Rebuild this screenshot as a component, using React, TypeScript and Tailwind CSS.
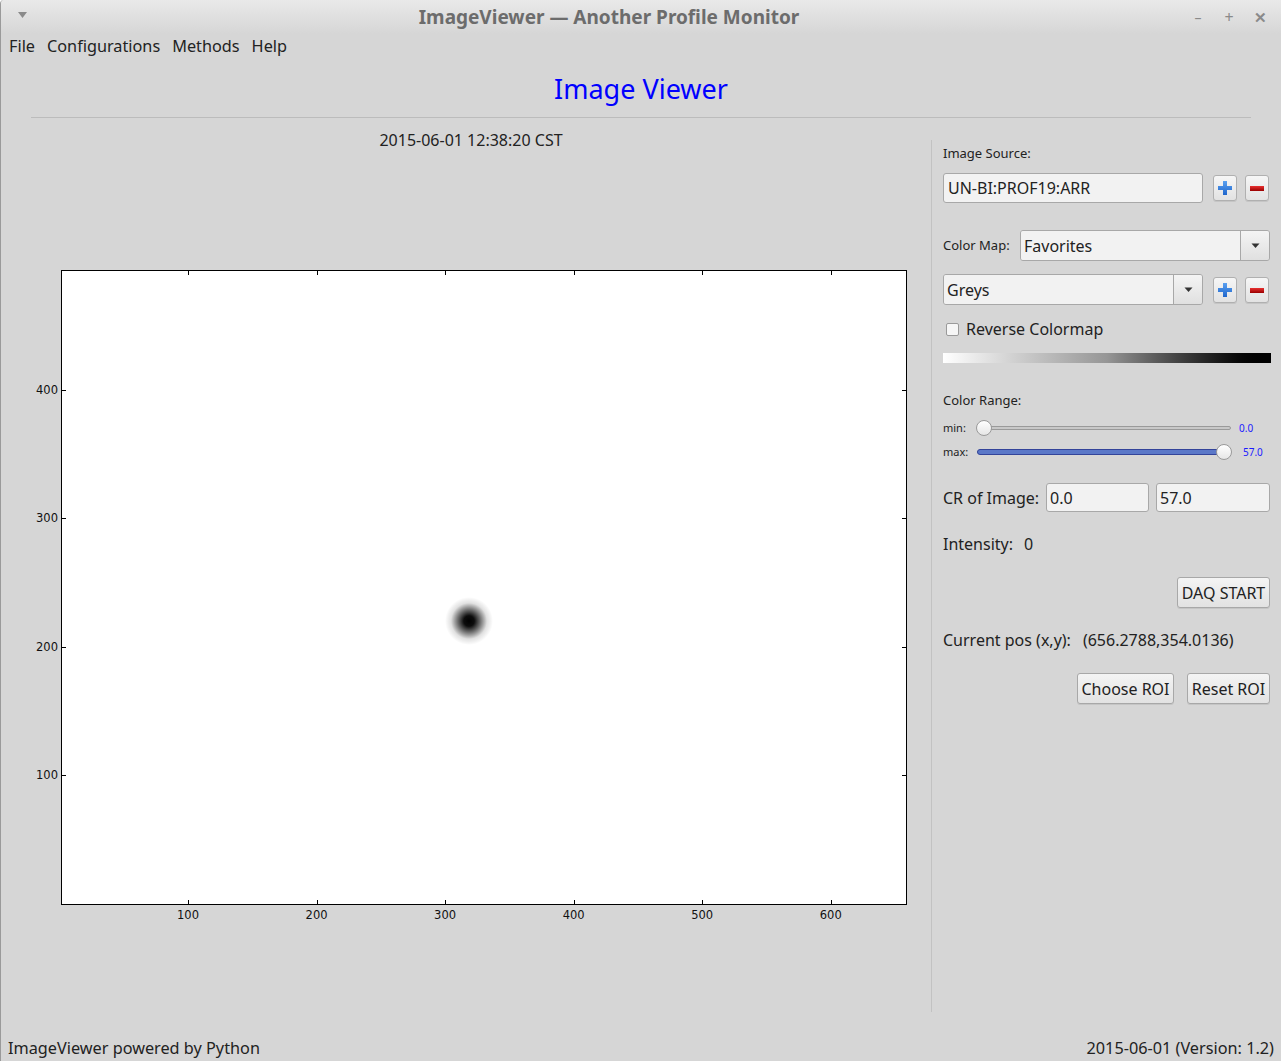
import React from "react";

const ui = "font-['Noto_Sans',sans-serif]";

function PlusIcon() {
  return (
    <svg width="16" height="16" viewBox="0 0 16 16">
      <defs>
        <linearGradient id="pg" x1="0" y1="0" x2="0" y2="1">
          <stop offset="0" stopColor="#5aa0f0" />
          <stop offset="1" stopColor="#1f66cc" />
        </linearGradient>
      </defs>
      <path d="M6 1h4v5h5v4h-5v5H6v-5H1V6h5z" fill="url(#pg)" />
    </svg>
  );
}

function MinusIcon() {
  return (
    <svg width="16" height="16" viewBox="0 0 16 16">
      <defs>
        <linearGradient id="mg" x1="0" y1="0" x2="0" y2="1">
          <stop offset="0" stopColor="#e83030" />
          <stop offset="1" stopColor="#9a0000" />
        </linearGradient>
      </defs>
      <rect x="1" y="6" width="14" height="5" fill="url(#mg)" />
    </svg>
  );
}

function IconButton({ children }: { children: React.ReactNode }) {
  return (
    <div className="flex h-[26px] w-[24px] items-center justify-center rounded-[3px] border border-[#b0b0b0] bg-gradient-to-b from-[#f6f6f6] to-[#e2e2e2] shadow-[0_1px_0_rgba(0,0,0,0.08)]">
      {children}
    </div>
  );
}

function Arrow() {
  return (
    <svg width="9" height="6" viewBox="0 0 9 6">
      <path d="M0.5 0.5h8L4.5 5z" fill="#333" />
    </svg>
  );
}

function Combo({ text, width }: { text: string; width: string }) {
  return (
    <div className={`flex h-[31px] ${width} overflow-hidden rounded-[3px] border border-[#a8a8a8]`}>
      <div className="flex flex-1 items-center bg-[#f2f2f2] px-[3px] text-[16px] text-[#222]">{text}</div>
      <div className="flex w-[29px] items-center justify-center border-l border-[#a8a8a8] bg-gradient-to-b from-[#f4f4f4] to-[#e0e0e0]">
        <Arrow />
      </div>
    </div>
  );
}

function Button({ text, width }: { text: string; width: string }) {
  return (
    <div className={`flex h-[31px] ${width} items-center justify-center rounded-[3px] border border-[#a8a8a8] bg-gradient-to-b from-[#f4f4f4] to-[#e2e2e2] text-[16px] text-[#222] shadow-[0_1px_0_rgba(0,0,0,0.08)]`}>
      {text}
    </div>
  );
}

function Slider({ label, value, pos, filled }: { label: string; value: string; pos: number; filled: boolean }) {
  return (
    <div className="flex h-[16px] items-center">
      <span className="w-[34px] text-[11px] text-[#222]">{label}</span>
      <div className="relative h-[16px] w-[256px]">
        <div className="absolute left-0 right-[2px] top-[6px] h-[4px] rounded-full border border-[#9a9a9a] bg-[#c8c8c8]" />
        {filled && (
          <div
            className="absolute left-0 top-[5px] h-[6px] rounded-full border border-[#33449a] bg-[#5b78c8]"
            style={{ width: pos }}
          />
        )}
        <div
          className="absolute top-0 h-[16px] w-[16px] rounded-full border border-[#9a9a9a] bg-gradient-to-b from-[#ffffff] to-[#e6e6e6]"
          style={{ left: pos - 8 }}
        />
      </div>
      <span className={`${filled ? "ml-[10px]" : "ml-[6px]"} text-[10px] text-[#1a1aff]`}>{value}</span>
    </div>
  );
}

const xTicks = [100, 200, 300, 400, 500, 600];
const yTicks = [100, 200, 300, 400];

function Plot() {
  // plot area 846 x 635, data x 1.2..659, y 0..493.6
  const W = 846;
  const H = 635;
  const px = (v: number) => 188 - 61 + (v - 100) * 1.2855;
  const py = (v: number) => 775 - 270 + (100 - v) * 1.2835;
  return (
    <div className="relative ml-[60px] mt-[119px] h-[635px] w-[846px]">
      <svg width={W} height={H} className="absolute left-0 top-0">
        <defs>
          <radialGradient id="spot">
            <stop offset="0" stopColor="#000" stopOpacity="1" />
            <stop offset="0.22" stopColor="#000" stopOpacity="0.95" />
            <stop offset="0.48" stopColor="#000" stopOpacity="0.55" />
            <stop offset="0.75" stopColor="#000" stopOpacity="0.12" />
            <stop offset="1" stopColor="#000" stopOpacity="0" />
          </radialGradient>
        </defs>
        <rect x="0.5" y="0.5" width={W - 1} height={H - 1} fill="#fff" stroke="#000" />
        <circle cx={469 - 61} cy={621 - 270} r="24" fill="url(#spot)" />
        {xTicks.map((t) => (
          <g key={t} stroke="#000" strokeWidth="1">
            <line x1={Math.round(px(t)) + 0.5} x2={Math.round(px(t)) + 0.5} y1={H - 1} y2={H - 5} />
            <line x1={Math.round(px(t)) + 0.5} x2={Math.round(px(t)) + 0.5} y1={1} y2={5} />
          </g>
        ))}
        {yTicks.map((t) => (
          <g key={t} stroke="#000" strokeWidth="1">
            <line y1={Math.round(py(t)) + 0.5} y2={Math.round(py(t)) + 0.5} x1={1} x2={5} />
            <line y1={Math.round(py(t)) + 0.5} y2={Math.round(py(t)) + 0.5} x1={W - 1} x2={W - 5} />
          </g>
        ))}
      </svg>
      {xTicks.map((t) => (
        <span
          key={t}
          className="absolute top-[637px] w-[40px] -translate-x-1/2 text-center font-['DejaVu_Sans',sans-serif] text-[11.5px] text-[#111]"
          style={{ left: px(t) }}
        >
          {t}
        </span>
      ))}
      {yTicks.map((t) => (
        <span
          key={t}
          className="absolute right-[849px] -translate-y-1/2 font-['DejaVu_Sans',sans-serif] text-[11.5px] leading-[14px] text-[#111]"
          style={{ top: py(t) }}
        >
          {t}
        </span>
      ))}
    </div>
  );
}

export default function App() {
  return (
    <div className={`${ui} flex h-[1061px] w-[1281px] flex-col overflow-hidden rounded-tl-[4px] border-l border-[#9a9a9a] bg-[#d6d6d6] text-[#222]`}>
      {/* Title bar */}
      <div className="flex h-[34px] items-center bg-gradient-to-b from-[#e9e9e9] to-[#d6d6d6]">
        <div className="flex w-[43px] justify-center">
          <svg width="9" height="6" viewBox="0 0 9 6" className="mb-[4px]">
            <path d="M0 0h9L4.5 6z" fill="#8a8a8a" />
          </svg>
        </div>
        <div className="flex-1 text-center text-[19px] font-bold text-[#6c6c6c]">ImageViewer — Another Profile Monitor</div>
        <div className="flex w-[107px] items-center pl-[14px] text-[#8a8a8a]">
          <span className="w-[20px] text-center text-[14px]">–</span>
          <span className="ml-[11px] w-[20px] text-center text-[16px]">+</span>
          <span className="ml-[11px] w-[20px] text-center text-[15px] font-bold">✕</span>
        </div>
      </div>

      {/* Menu */}
      <div className="flex h-[24px] items-center gap-[12px] pl-[8px] text-[16.25px]">
        <span>File</span>
        <span>Configurations</span>
        <span>Methods</span>
        <span>Help</span>
      </div>

      {/* Heading */}
      <div className="flex h-[59px] items-center justify-center pt-[4px] text-[27px] text-[#0000ff]">Image Viewer</div>
      <div className="mx-[30px] h-px w-[1220px] bg-[#bcbcbc]" />

      {/* Main */}
      <div className="flex flex-1">
        <div className="flex w-[930px] flex-col">
          <div className="mt-[11px] pl-[10px] text-center text-[16px] leading-[22px]">2015-06-01 12:38:20 CST</div>
          <Plot />
        </div>

        <div className="mb-[24px] mt-[22px] flex w-[350px] flex-col border-l border-[#c2c2c2] pl-[11px]">
          <div className="mt-[4px] text-[13px] leading-[18px]">Image Source:</div>
          <div className="mt-[11px] flex items-center">
            <div className="flex h-[30px] w-[260px] items-center rounded-[3px] border border-[#a8a8a8] bg-[#f2f2f2] px-[4px] text-[16px]">
              UN-BI:PROF19:ARR
            </div>
            <div className="ml-[10px]"><IconButton><PlusIcon /></IconButton></div>
            <div className="ml-[8px]"><IconButton><MinusIcon /></IconButton></div>
          </div>

          <div className="mt-[27px] flex items-center">
            <span className="w-[77px] text-[13px]">Color Map:</span>
            <Combo text="Favorites" width="w-[250px]" />
          </div>

          <div className="mt-[13px] flex items-center">
            <Combo text="Greys" width="w-[260px]" />
            <div className="ml-[10px]"><IconButton><PlusIcon /></IconButton></div>
            <div className="ml-[8px]"><IconButton><MinusIcon /></IconButton></div>
          </div>

          <div className="mt-[14px] flex h-[20px] items-center">
            <div className="ml-[3px] h-[13px] w-[13px] rounded-[2px] border border-[#9a9a9a] bg-[#f6f6f6]" />
            <span className="ml-[7px] text-[16px]">Reverse Colormap</span>
          </div>

          <div className="mt-[14px] h-[10px] w-[328px] bg-gradient-to-r from-[#ffffff] via-[#969696] to-[#000000]" />

          <div className="mt-[28px] text-[13px] leading-[18px]">Color Range:</div>
          <div className="mt-[11px]">
            <Slider label="min:" value="0.0" pos={7} filled={false} />
          </div>
          <div className="mt-[8px]">
            <Slider label="max:" value="57.0" pos={247} filled={true} />
          </div>

          <div className="mt-[23px] flex h-[29px] items-center">
            <span className="w-[103px] text-[16px]">CR of Image:</span>
            <div className="flex h-[29px] w-[103px] items-center rounded-[3px] border border-[#a8a8a8] bg-[#f2f2f2] px-[3px] text-[16px]">0.0</div>
            <div className="ml-[7px] flex h-[29px] w-[114px] items-center rounded-[3px] border border-[#a8a8a8] bg-[#f2f2f2] px-[3px] text-[16px]">57.0</div>
          </div>

          <div className="mt-[21px] text-[16px] leading-[22px]">
            Intensity:<span className="ml-[11px]">0</span>
          </div>

          <div className="mt-[22px] flex justify-end pr-[11px]">
            <Button text="DAQ START" width="w-[93px]" />
          </div>

          <div className="mt-[21px] text-[16px] leading-[22px]">
            Current pos (x,y):<span className="ml-[12px]">(656.2788,354.0136)</span>
          </div>

          <div className="mt-[22px] flex justify-end gap-[13px] pr-[11px]">
            <Button text="Choose ROI" width="w-[97px]" />
            <Button text="Reset ROI" width="w-[83px]" />
          </div>
        </div>
      </div>

      {/* Status */}
      <div className="flex h-[25px] items-center justify-between pl-[7px] pr-[7px] pt-[1px] pb-[1px] text-[16.25px]">
        <span>ImageViewer powered by Python</span>
        <span>2015-06-01 (Version: 1.2)</span>
      </div>
    </div>
  );
}
